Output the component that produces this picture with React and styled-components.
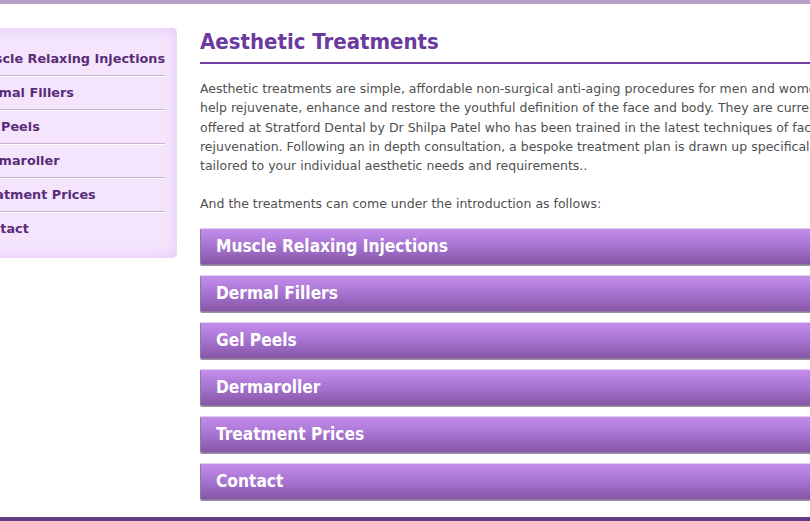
import React from 'react'
import styled, { createGlobalStyle } from 'styled-components'

const treatments = [
  'Muscle Relaxing Injections',
  'Dermal Fillers',
  'Gel Peels',
  'Dermaroller',
  'Treatment Prices',
  'Contact',
]

const intro = [
  'Aesthetic treatments are simple, affordable non-surgical anti-aging procedures for men and women that',
  'help rejuvenate, enhance and restore the youthful definition of the face and body. They are currently',
  'offered at Stratford Dental by Dr Shilpa Patel who has been trained in the latest techniques of facial',
  'rejuvenation. Following an in depth consultation, a bespoke treatment plan is drawn up specifically',
  'tailored to your individual aesthetic needs and requirements..',
]

const GlobalStyle = createGlobalStyle`
  html, body {
    margin: 0;
    padding: 0;
    background: #fff;
    overflow: hidden;
  }
  body {
    font-family: "DejaVu Sans", Verdana, sans-serif;
  }
`

const Page = styled.div`
  display: flex;
  flex-direction: column;
  min-height: 100vh;
`

const TopBar = styled.div`
  height: 4px;
  background: #b69fc9;
`

const Main = styled.div`
  flex: 1;
  display: flex;
  align-items: flex-start;
  gap: 23px;
  margin-left: -32px;
  padding-top: 24px;
`

const Sidebar = styled.nav`
  width: 209px;
  flex-shrink: 0;
  box-sizing: border-box;
  padding: 15px 12px 13px 5px;
  background: #f4e5fd;
  border-radius: 0 5px 5px 0;
  box-shadow: inset 0 0 14px #e2c5f8;
`

const SideLink = styled.a`
  display: block;
  height: 32px;
  line-height: 32px;
  font-family: "DejaVu Sans", Verdana, sans-serif;
  font-weight: bold;
  font-size: 12.8px;
  color: #5a2c78;
  text-decoration: none;
  white-space: nowrap;
  border-bottom: ${p => (p.last ? 'none' : '1px solid #c7b1d6')};
  box-shadow: ${p => (p.last ? 'none' : '0 1px 0 #ffffff')};
  margin-bottom: ${p => (p.last ? '0' : '1px')};
`

const Content = styled.div`
  flex: 1;
  min-width: 700px;
`

const Heading = styled.h1`
  margin: 0;
  padding-bottom: 6px;
  font-family: "DejaVu Sans Condensed", "DejaVu Sans", sans-serif;
  font-weight: bold;
  font-size: 22px;
  line-height: 28px;
  color: #6a3a9e;
  border-bottom: 2px solid #7041a3;
  white-space: nowrap;
`

const Text = styled.p`
  margin: ${p => p.top || '15px'} 0 0;
  font-family: "DejaVu Sans", Verdana, sans-serif;
  font-size: 12.5px;
  line-height: 19.25px;
  color: #4f4f4f;
  white-space: nowrap;
`

const ButtonList = styled.div`
  display: flex;
  flex-direction: column;
  gap: 10px;
  margin-top: 14px;
`

const TreatmentButton = styled.a`
  display: block;
  height: 35px;
  line-height: 34px;
  padding-left: 15px;
  border: 1px solid #8e7a9c;
  border-top-color: #e3cdf2;
  border-right: none;
  border-radius: 2px 0 0 2px;
  background: linear-gradient(#c48dec, #a673d0 50%, #8656a6);
  box-shadow: 0 1px 0 #9c8fa3;
  font-family: "DejaVu Sans Condensed", "DejaVu Sans", sans-serif;
  font-weight: bold;
  font-size: 17.2px;
  color: #fff;
  text-decoration: none;
  white-space: nowrap;
`

const BottomBar = styled.div`
  height: 4px;
  background: #5e3e82;
`

export default function App() {
  return (
    <Page>
      <GlobalStyle />
      <TopBar />
      <Main>
        <Sidebar>
          {treatments.map((t, i) => (
            <SideLink key={t} href="#" last={i === treatments.length - 1}>
              {t}
            </SideLink>
          ))}
        </Sidebar>
        <Content>
          <Heading>Aesthetic Treatments</Heading>
          <Text>
            {intro.map((line, i) => (
              <React.Fragment key={i}>
                {line}
                {i < intro.length - 1 && <br />}
              </React.Fragment>
            ))}
          </Text>
          <Text top="19px">And the treatments can come under the introduction as follows:</Text>
          <ButtonList>
            {treatments.map(t => (
              <TreatmentButton key={t} href="#">
                {t}
              </TreatmentButton>
            ))}
          </ButtonList>
        </Content>
      </Main>
      <BottomBar />
    </Page>
  )
}
